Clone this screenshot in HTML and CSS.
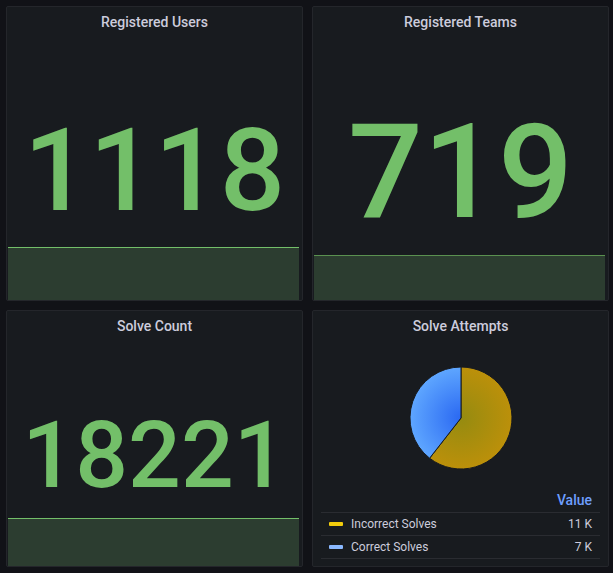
FILE: index.html
```html
<!DOCTYPE html>
<html lang="en">
<head>
<meta charset="utf-8">
<title>Dashboard</title>
<link rel="stylesheet" href="styles.css">
</head>
<body>
<main class="dashboard">
  <section class="panel stat">
    <header class="panel-title">Registered Users</header>
    <div class="stat-value value-users">1118</div>
    <div class="spark spark-users"></div>
  </section>

  <section class="panel stat">
    <header class="panel-title">Registered Teams</header>
    <div class="stat-value value-teams">719</div>
    <div class="spark spark-teams"></div>
  </section>

  <section class="panel stat">
    <header class="panel-title">Solve Count</header>
    <div class="stat-value value-solves">18221</div>
    <div class="spark spark-solves"></div>
  </section>

  <section class="panel pie-panel">
    <header class="panel-title">Solve Attempts</header>
    <svg class="pie" width="110" height="110" viewBox="0 0 110 110">
      <defs>
        <radialGradient id="gYellow" gradientUnits="userSpaceOnUse" cx="55" cy="55" r="51">
          <stop offset="0" stop-color="#958b10"/>
          <stop offset="1" stop-color="#bc900a"/>
        </radialGradient>
        <radialGradient id="gBlue" gradientUnits="userSpaceOnUse" cx="55" cy="55" r="51">
          <stop offset="0" stop-color="#2a68f2"/>
          <stop offset="1" stop-color="#5ea6ff"/>
        </radialGradient>
      </defs>
      <path d="M55 55 L55 4 A51 51 0 1 1 23.6 95.2 Z" fill="url(#gYellow)" stroke="#181b1f" stroke-width="1"/>
      <path d="M55 55 L55 4 A51 51 0 0 0 23.6 95.2 Z" fill="url(#gBlue)" stroke="#181b1f" stroke-width="1"/>
    </svg>
    <table class="legend">
      <thead>
        <tr><th></th><th class="legend-head">Value</th></tr>
      </thead>
      <tbody>
        <tr>
          <td><span class="swatch swatch-yellow"></span>Incorrect Solves</td>
          <td class="legend-val">11 K</td>
        </tr>
        <tr>
          <td><span class="swatch swatch-blue"></span>Correct Solves</td>
          <td class="legend-val">7 K</td>
        </tr>
      </tbody>
    </table>
  </section>
</main>
</body>
</html>
```
FILE: styles.css
```css
* { box-sizing: border-box; }

html, body {
  margin: 0;
  padding: 0;
  background: #111217;
  width: 613px;
  height: 573px;
  overflow: hidden;
}

body {
  font-family: Roboto, "Liberation Sans", sans-serif;
  color: #ccccdc;
}

.dashboard {
  display: grid;
  grid-template-columns: 297px 297px;
  grid-template-rows: 295px 257px;
  column-gap: 9px;
  row-gap: 9px;
  padding: 6px 4px 6px 6px;
}

.panel {
  background: #181b1f;
  border: 1px solid #24262b;
  border-radius: 2px;
  display: flex;
  flex-direction: column;
  overflow: hidden;
}

.panel-title {
  height: 30px;
  line-height: 30px;
  flex: none;
  text-align: center;
  font-size: 14px;
  font-weight: 500;
  color: #ccccdc;
}

.stat-value {
  flex: none;
  text-align: center;
  color: #73bf69;
  line-height: 1;
  font-weight: 500;
}

.value-users { font-size: 115px; margin-top: 76px; }
.value-teams { font-size: 132px; margin-top: 69px; }
.value-solves { font-size: 93px; margin-top: 68px; }

.spark {
  margin: auto 3px 0 1px;
  background: #2c3d30;
  border-top: 1px solid #73bf69;
  flex: none;
}

.spark-users { height: 53px; }
.spark-teams { height: 45px; border-top-color: #5a9150; }
.spark-solves { height: 48px; }

.pie {
  display: block;
  margin: 22px auto 0;
  flex: none;
}

.legend {
  margin: auto 8px 7px 8px;
  border-collapse: collapse;
  font-size: 12px;
  color: #ccccdc;
}

.legend th,
.legend td {
  border-bottom: 1px solid #2a2c31;
  padding: 0 8px;
}

.legend th {
  height: 24px;
  text-align: right;
}

.legend-head {
  font-size: 14px;
  font-weight: 500;
  color: #6e9fff;
}

.legend td {
  height: 23px;
}

.legend-val {
  text-align: right;
}

.swatch {
  display: inline-block;
  width: 14px;
  height: 4px;
  border-radius: 1px;
  margin-right: 8px;
  vertical-align: middle;
  position: relative;
  top: -1px;
}

.swatch-yellow { background: #f2cc0c; }
.swatch-blue { background: #8ab8ff; }
```
